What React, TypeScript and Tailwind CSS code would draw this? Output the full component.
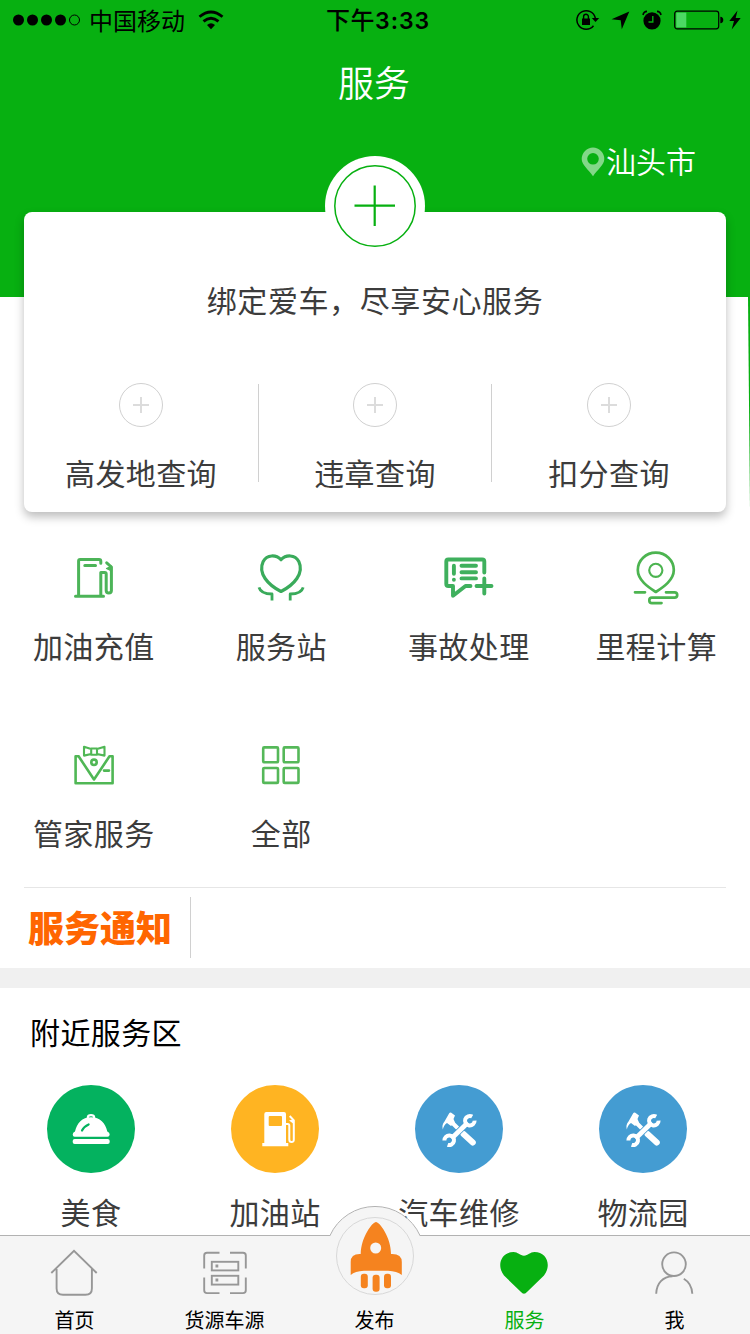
import type { ReactNode } from "react";

const labelClass = "text-[30px] leading-[44px] tracking-[0.4px] whitespace-nowrap";

/* STATUS BAR */
function StatusBar() {
  return (
    <div className="flex h-10 items-center justify-between text-black">
      <div className="flex w-[300px] items-center pl-[13px]">
        <svg width="68" height="12" viewBox="0 0 68 12">
          <circle cx="5.5" cy="6" r="5.5" />
          <circle cx="19.5" cy="6" r="5.5" />
          <circle cx="33.5" cy="6" r="5.5" />
          <circle cx="47.5" cy="6" r="5.5" />
          <circle cx="61.5" cy="6" r="5" fill="none" stroke="#000" />
        </svg>
        <span className="ml-2 text-[24px] leading-10">中国移动</span>
        <svg className="ml-[13px]" width="26" height="20" viewBox="0 0 26 20" fill="none" stroke="#000" strokeWidth="2.8">
          <path d="M1.5 6.8Q13 -2.8 24.5 6.8" />
          <path d="M5.5 11.4Q13 5 20.5 11.4" />
          <path d="M9 15Q13 11.6 17 15L13 19.2Z" fill="#000" stroke="none" />
        </svg>
      </div>
      <div className="flex-1 pl-[26px] text-[24px] font-medium leading-10 tracking-[0.5px]">
        下午<span className="font-['Inter'] text-[23px] font-semibold tracking-[1px]">3:33</span>
      </div>
      <div className="flex items-center pr-[9px]">
        <svg width="24" height="22" viewBox="0 0 24 22">
          <path d="M17.5 16.8A9.3 9.3 0 1 1 19.3 9" fill="none" stroke="#000" strokeWidth="1.5" />
          <path d="M15.8 9H23.2L19.5 13Z" />
          <path d="M6 9.5H14V16H6Z" />
          <path d="M7.6 10V7.6A2.4 2.4 0 0 1 12.4 7.6V10" fill="none" stroke="#000" strokeWidth="1.4" />
        </svg>
        <svg className="ml-[11px]" width="19" height="19" viewBox="0 0 19 19">
          <path d="M18.3 0.5L10.8 18.3L9.7 9.3L0.5 8.2Z" />
        </svg>
        <svg className="ml-3" width="20" height="20" viewBox="0 0 20 20">
          <circle cx="10" cy="10.8" r="8.6" />
          <path d="M1 5Q1.6 1.6 5 1.4M19 5Q18.4 1.6 15 1.4" fill="none" stroke="#000" strokeWidth="1.6" />
          <path d="M10.8 6V12H6.5" fill="none" stroke="#07b011" strokeWidth="1.4" />
        </svg>
        <svg className="ml-3" width="50" height="20" viewBox="0 0 50 20">
          <rect x="0.7" y="1.2" width="44" height="17.6" rx="2.5" fill="none" stroke="#000" strokeWidth="1.2" />
          <rect x="2.3" y="2.6" width="10" height="14.8" fill="#4cd964" />
          <path d="M46.3 6.7Q49.3 7 49.3 10T46.3 13.3Z" />
        </svg>
        <svg className="ml-[5px]" width="12" height="20" viewBox="0 0 12 20">
          <path d="M8.5 0.5L0.3 11H5L2.7 19.5L11.7 8H6.7Z" />
        </svg>
      </div>
    </div>
  );
}

/* SERVICE GRID ICONS */
function LineIcon({ color, width, children }: { color: string; width: number; children: ReactNode }) {
  return (
    <svg width="56" height="56" viewBox="0 0 56 56" fill="none" stroke={color} strokeWidth={width} strokeLinecap="round" strokeLinejoin="round">
      {children}
    </svg>
  );
}

const services = [
  {
    label: "加油充值",
    icon: (
      <LineIcon color="#4cb458" width={3}>
        <path d="M9.5 46.3H37.5M12.6 46V11Q12.6 9.5 14.1 9.5H33Q34.8 9.5 34.8 11.2V13.2M18.8 15.5H29.5M34.8 46V22.4H38.7Q40.2 22.4 40.2 24V40.5Q40.2 43 42.8 43T45.4 40.5V17L40.7 12.8" />
        <path d="M45.5 16L40.5 18.5L45.5 21Z" strokeWidth="1.2" fill="#4cb458" />
      </LineIcon>
    ),
  },
  {
    label: "服务站",
    icon: (
      <LineIcon color="#3aab5b" width={3.2}>
        <path d="M28 9.7C23 4.5 14 4.4 10.2 11.4C4.6 23.5 15 34.8 28 41.5C41 34.8 51.4 23.5 45.8 11.4C42 4.4 33 4.5 28 9.7Z" />
        <path d="M6 37.4Q7.8 44 19 44V50.5M50.2 37.4Q48.4 44 37.2 44V50.5" strokeWidth="2.8" strokeLinecap="butt" />
      </LineIcon>
    ),
  },
  {
    label: "事故处理",
    icon: (
      <LineIcon color="#3fb05d" width={3.9}>
        <path d="M43.3 22.5V11.5Q43.3 9.5 41.3 9.5H7.3Q5.3 9.5 5.3 11.5V34Q5.3 36 7.3 36H12V45.7L24.5 36H29.5M35.5 36H50.5M43.3 28.5V43.5M20.5 15.7H35M20.5 22.2H35M20.5 28.4H35M12.9 15.8V23.8M12.9 29.7V29.8" />
      </LineIcon>
    ),
  },
  {
    label: "里程计算",
    icon: (
      <LineIcon color="#4cb450" width={2.7}>
        <path d="M27.8 42C20 37 9.8 30 9.8 20A18 17.4 0 0 1 45.8 20C45.8 30 35.6 37 27.8 42Z" />
        <circle cx="27.8" cy="20.3" r="6.6" strokeWidth="2.1" />
        <path d="M7 42.3H17M38 42.3H46.5A2.7 2.7 0 0 1 46.5 47.7H24A2.7 2.7 0 0 0 24 53.1H33.5" />
      </LineIcon>
    ),
  },
  {
    label: "管家服务",
    icon: (
      <LineIcon color="#50b755" width={2.6}>
        <path d="M12.6 19.3H9.6V46.3H46.6V19.3H43.5L28 42.5L12.6 19.3M38 33.6H43" />
        <circle cx="28" cy="25.3" r="2.7" />
        <path d="M25.2 11.5H31V17.8H25.2ZM25.2 12L18 9.8V18.6L25.2 17M31 12L38.5 9.8V18.6L31 17" strokeWidth="2.1" />
      </LineIcon>
    ),
  },
  {
    label: "全部",
    icon: (
      <LineIcon color="#55b859" width={2.6}>
        <rect x="10.2" y="10.4" width="14.8" height="14.9" rx="1" />
        <rect x="30.7" y="10.4" width="14.8" height="14.9" rx="1" />
        <rect x="10.2" y="31" width="14.8" height="14.9" rx="1" />
        <rect x="30.7" y="31" width="14.8" height="14.9" rx="1" />
      </LineIcon>
    ),
  },
];

/* NEARBY ICONS */
function ToolsIcon() {
  return (
    <svg width="88" height="88" viewBox="0 0 88 88" fill="none" stroke="#fff">
      <path d="M37.5 38L43 43.5" strokeWidth="4" />
      <path d="M48.5 49L57.8 57.5" strokeWidth="6" strokeLinecap="round" />
      <path d="M27.8 44.5Q26.5 40 29.5 36.5L34.2 28.3Q35 27 36.3 27.8L40 30.5L38.5 34L40 37.5L36 41L32 38Q29 39.5 27.8 44.5Z" fill="#fff" stroke="none" />
      <path d="M36.5 53.5L53 37.5" stroke="#449cd2" strokeWidth="6.5" />
      <path d="M36.5 53.5L53 37.5" strokeWidth="4.8" />
      <path d="M57.2 31.6A4.8 4.8 0 1 0 59.6 35.6M29.4 55.5A4.8 4.8 0 1 1 32.6 59.8" strokeWidth="4" />
    </svg>
  );
}

const nearby = [
  {
    label: "美食",
    bg: "bg-[#04b25f]",
    icon: (
      <svg width="88" height="88" viewBox="0 0 88 88" fill="#fff">
        <path d="M28 46.5C30 38 35 32.3 44 32.3S58.5 38 60.3 46.5Q62.7 47.3 62.7 49.5Q62.5 51.7 60.5 51.7H27.7Q25.7 51.7 25.7 49.5Q25.7 47.3 28 46.5Z" />
        <rect x="25.7" y="54" width="37" height="5" rx="2" />
        <path d="M40.8 34V32.5Q41 30.2 44 30.2T47.2 32.5V34" fill="none" stroke="#fff" strokeWidth="2.2" />
        <path d="M35 45.5Q37 41.5 41.6 39.5" fill="none" stroke="#04b25f" strokeWidth="2.2" strokeLinecap="round" />
      </svg>
    ),
  },
  {
    label: "加油站",
    bg: "bg-[#ffb422]",
    icon: (
      <svg width="88" height="88" viewBox="0 0 88 88" fill="#fff">
        <path fillRule="evenodd" d="M35.3 27H53Q55 27 55 29V58H57.3V61.3H31.3V58H33.3V29Q33.3 27 35.3 27ZM37.7 32V40Q37.7 41 38.7 41H50Q51 41 51 40V32Q51 31 50 31H38.7Q37.7 31 37.7 32Z" />
        <path d="M55 39H56.8Q58.3 39 58.3 40.5V54.5Q58.3 57 60.6 57T62.8 54.5V35.3L58.7 31" fill="none" stroke="#fff" strokeWidth="2" />
        <path d="M58 35.5L62.8 34V39Z" />
      </svg>
    ),
  },
  { label: "汽车维修", bg: "bg-[#449cd2]", icon: <ToolsIcon /> },
  { label: "物流园", bg: "bg-[#449cd2]", icon: <ToolsIcon /> },
];

/* TAB BAR */
function TabIcon({ children }: { children?: ReactNode }) {
  return (
    <svg width="56" height="56" viewBox="0 0 56 56" fill="none" stroke="#979797" strokeWidth="1.9">
      {children}
    </svg>
  );
}

const tabs = [
  {
    label: "首页",
    icon: (
      <TabIcon>
        <path d="M4.3 28L27 5.8L49.7 28M9.6 24V43.5Q9.6 49.8 16 49.8H38.5Q44.9 49.8 44.9 43.5V24" />
      </TabIcon>
    ),
  },
  {
    label: "货源车源",
    icon: (
      <TabIcon>
        <path d="M22.5 7.7H10Q7.2 7.7 7.2 10.5V23.5M33 7.7H46Q48.8 7.7 48.8 10.5V23.5M7.2 32.5V45.3Q7.2 48.1 10 48.1H22.5M33 48.1H46Q48.8 48.1 48.8 45.3V32.5" />
        <rect x="14.8" y="16.8" width="26.5" height="8.6" />
        <rect x="14.8" y="30.8" width="26.5" height="8.8" />
        <path d="M18.5 21H21.3M18.5 35H21.3" strokeWidth="3" />
      </TabIcon>
    ),
  },
  { label: "发布", icon: <TabIcon /> },
  {
    label: "服务",
    active: true,
    icon: (
      <TabIcon>
        <path d="M27 48.7Q25.5 48.7 23.5 46.5L7 30.5C-1 20 4.5 7 16.5 7C21 7 23 10.7 27 10.7S33 7 37.5 7C49.5 7 55 20 47 30.5L30.5 46.5Q28.5 48.7 27 48.7Z" fill="#07b011" stroke="none" />
      </TabIcon>
    ),
  },
  {
    label: "我",
    icon: (
      <TabIcon>
        <circle cx="27" cy="19.2" r="11.8" />
        <path d="M9.2 48.8C9.5 38 16 31.5 25.5 31.2M36.8 33.7C42.5 37 45 42 45.3 48.8" />
      </TabIcon>
    ),
  },
];

function TabBar() {
  return (
    <nav className="relative h-[99px] shrink-0 border-t border-[#b2b2b2] bg-[#f5f5f5]">
      {/* raised publish button */}
      <svg className="absolute -top-[30px] left-[325px]" width="100" height="92" viewBox="0 0 100 92">
        <path d="M5 30A49.4 49.4 0 0 1 95 30V36H5Z" fill="#f5f5f5" />
        <path d="M0 29.5H5A49.4 49.4 0 0 1 95 29.5H100" fill="none" stroke="#b2b2b2" />
        <circle cx="50" cy="50" r="38.5" fill="none" stroke="#d8d8d8" />
        <path d="M51 16C54.5 16 66 31 66 48Q76.8 47.5 76.8 56V69Q72 65 63 64.7H39Q30 65 25.7 69V56Q25.7 47.5 35.7 48C36 31 47.5 16 51 16Z" fill="#f5831f" />
        <circle cx="50.7" cy="42" r="5.5" fill="#f5f5f5" />
        <rect x="35.8" y="67.7" width="7" height="14.5" rx="3" fill="#f5831f" />
        <rect x="47.6" y="68.7" width="7" height="17" rx="3" fill="#f5831f" />
        <rect x="59" y="67.7" width="7" height="14.5" rx="3" fill="#f5831f" />
      </svg>
      <div className="grid grid-cols-5">
        {tabs.map((tab) => (
          <div key={tab.label} className="flex flex-col items-center pt-[9px]">
            {tab.icon}
            <span className={`-ml-px mt-[5px] text-[20px] leading-7 ${tab.active ? "text-[#07b011]" : "text-black"}`}>
              {tab.label}
            </span>
          </div>
        ))}
      </div>
    </nav>
  );
}

export default function App() {
  return (
    <div className="flex h-[1334px] w-[750px] flex-col overflow-hidden bg-white font-['Noto_Sans_CJK_SC',sans-serif] text-[#3c3c3c]">
      <main className="flex-1 overflow-hidden">
        {/* HEADER */}
        <header className="relative h-[297px] bg-[#07b011] text-white">
          <StatusBar />
          <h1 className="mt-[14px] pr-0.5 text-center text-[36px] font-[350] leading-[54px]">服务</h1>
          <div className="mt-[30px] flex items-center justify-end pr-[54px]">
            <svg className="mt-1" width="24" height="30" viewBox="0 0 24 30">
              <path fillRule="evenodd" d="M12 0.5A11.5 11.5 0 0 1 23.3 12C23.3 18 16.5 22.5 12 29.3C7.5 22.5 0.7 18 0.7 12A11.5 11.5 0 0 1 12 0.5ZM12 6A5.8 5.8 0 1 0 12 17.6A5.8 5.8 0 1 0 12 6Z" fill="#83d888" />
            </svg>
            <span className="ml-px text-[30px] font-[350] leading-[44px]">汕头市</span>
          </div>
          <svg className="absolute right-0 top-[297px]" width="3" height="213" viewBox="0 0 3 213">
            <path d="M1 0H3V213Z" fill="#07b011" />
          </svg>
        </header>

        {/* BIND CARD */}
        <section className="relative mx-6 -mt-[85px] h-[300px] rounded-lg bg-white shadow-[0_5px_10px_rgba(0,0,0,0.26)]">
          <div className="absolute -top-14 left-[301px] flex size-[100px] items-center justify-center rounded-full bg-white">
            <svg width="82" height="82" viewBox="0 0 82 82" fill="none" stroke="#07b011">
              <circle cx="41" cy="41" r="40.2" strokeWidth="1.5" />
              <path d="M20.5 40.7H61M40.7 20.5V61" strokeWidth="2.2" />
            </svg>
          </div>
          <p className="pt-[65px] text-center text-[30px] leading-[44px] tracking-[0.6px]">绑定爱车，尽享安心服务</p>
          <div className="mt-[63px] grid h-[110px] grid-cols-3">
            {["高发地查询", "违章查询", "扣分查询"].map((label, i) => (
              <div key={label} className="flex">
                <div className="flex flex-1 flex-col items-center">
                  <svg className="-mt-px" width="44" height="44" viewBox="0 0 44 44" fill="none">
                    <circle cx="22" cy="22" r="21.5" stroke="#d0d0d0" />
                    <path d="M14 22H30M22 14V30" stroke="#dcdcdc" strokeWidth="2" />
                  </svg>
                  <span className={`mt-[23px] ${labelClass}`}>{label}</span>
                </div>
                {i === 0 && <div className="-mr-px h-[98px] w-px bg-[#d0d0d0]" />}
                {i === 1 && <div className="-ml-px h-[98px] w-px bg-[#d0d0d0]" />}
              </div>
            ))}
          </div>
        </section>

        {/* SERVICES */}
        <section className="grid grid-cols-4 grid-rows-[187px_188px]">
          {services.map((item) => (
            <div key={item.label} className="flex flex-col items-center pt-[38px]">
              {item.icon}
              <span className={`mt-[17px] ${labelClass}`}>{item.label}</span>
            </div>
          ))}
        </section>

        {/* NOTICE */}
        <section className="mx-6 flex h-[81px] items-center border-t border-[#e6e6e6] pb-0.5">
          <h2 className="w-[166px] pb-0.5 pl-1 text-[36px] font-black leading-none text-[#ff6600]">服务通知</h2>
          <div className="h-[61px] w-px bg-[#d0d0d0]" />
        </section>
        <div className="h-5 bg-[#f0f0f0]" />

        {/* NEARBY */}
        <section>
          <h2 className={`pl-[30px] pt-[21px] text-black ${labelClass}`}>附近服务区</h2>
          <div className="mt-8 grid w-[736px] -translate-x-px grid-cols-4">
            {nearby.map((item) => (
              <div key={item.label} className="flex flex-col items-center">
                <div className={`size-[88px] rounded-full ${item.bg}`}>{item.icon}</div>
                <span className={`mt-4 ${labelClass}`}>{item.label}</span>
              </div>
            ))}
          </div>
        </section>
      </main>
      <TabBar />
    </div>
  );
}
